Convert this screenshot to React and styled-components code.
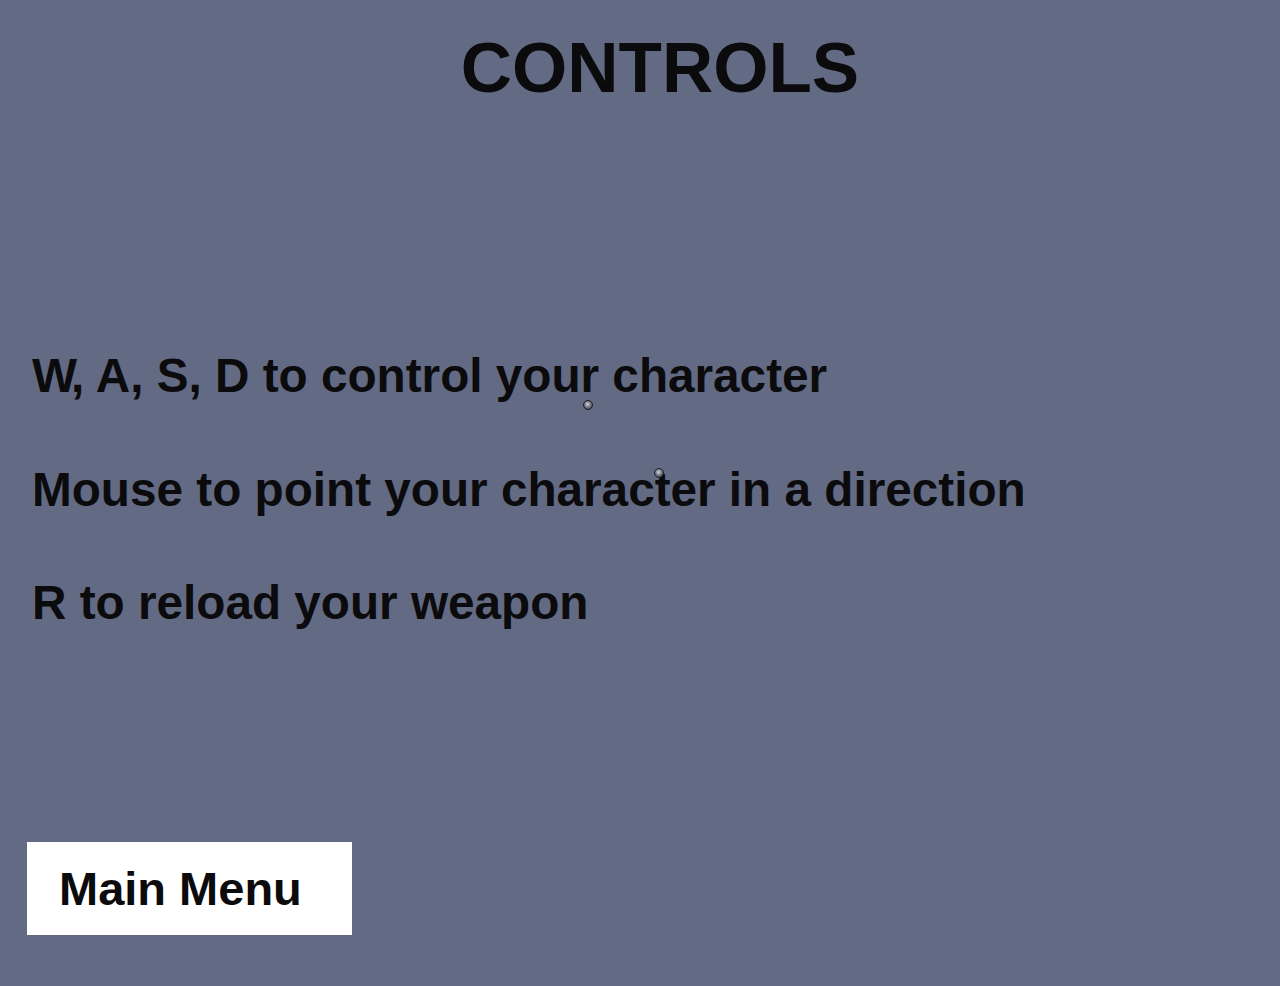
import React from "react";
import styled, { createGlobalStyle } from "styled-components";

const Global = createGlobalStyle`
  html, body { margin: 0; padding: 0; background: #636a83; }
  body { font-family: "Liberation Sans", Arial, sans-serif; }
`;

const Screen = styled.div`
  position: relative;
  box-sizing: border-box;
  width: 1280px;
  height: 986px;
  background: #636a83;
  color: #0b0b0d;
  display: flex;
  flex-direction: column;
  padding: 32px 0 51px;
  overflow: hidden;
`;

const Title = styled.h1`
  margin: 0;
  padding-left: 40px;
  text-align: center;
  font-size: 71px;
  line-height: 1;
  font-weight: 700;
`;

const ControlList = styled.ul`
  list-style: none;
  margin: 249px 0 0;
  padding: 0 0 0 32px;
  display: flex;
  flex-direction: column;
  gap: 66px;
`;

const ControlItem = styled.li`
  font-size: 47.7px;
  line-height: 1;
  font-weight: 700;
  white-space: nowrap;
`;

/* tighter pair spacing for the "W," key pair */
const Kern = styled.span`
  letter-spacing: -6px;
`;

const MenuButton = styled.button`
  margin-top: auto;
  margin-left: 27px;
  width: 325px;
  height: 93px;
  box-sizing: border-box;
  border: none;
  background: #ffffff;
  color: #0b0b0d;
  display: flex;
  align-items: center;
  padding: 0 0 0 32px;
  font-family: "Liberation Sans", Arial, sans-serif;
  font-size: 47px;
  font-weight: 700;
  line-height: 1;
  cursor: pointer;
`;

/* Stray projectiles floating over the menu */
const Pellet = styled.span`
  position: absolute;
  box-sizing: border-box;
  width: 10px;
  height: 10px;
  border-radius: 50%;
  border: 1px solid #1c1d22;
  background: radial-gradient(circle at 45% 40%, #d8dae2 0%, #8a8d98 35%, #4a4c56 75%, #2a2b31 100%);
  left: ${(p) => p.$x - 5}px;
  top: ${(p) => p.$y - 5}px;
`;

export default function App() {
  return (
    <>
      <Global />
      <Screen>
        <Title>CONTROLS</Title>
        <ControlList>
          <ControlItem>
            <Kern>W</Kern>, A, S, D to control your character
          </ControlItem>
          <ControlItem>Mouse to point your character in a direction</ControlItem>
          <ControlItem>R to reload your weapon</ControlItem>
        </ControlList>
        <MenuButton>Main Menu</MenuButton>
        <Pellet $x={588} $y={405} />
        <Pellet $x={659} $y={473} />
      </Screen>
    </>
  );
}
